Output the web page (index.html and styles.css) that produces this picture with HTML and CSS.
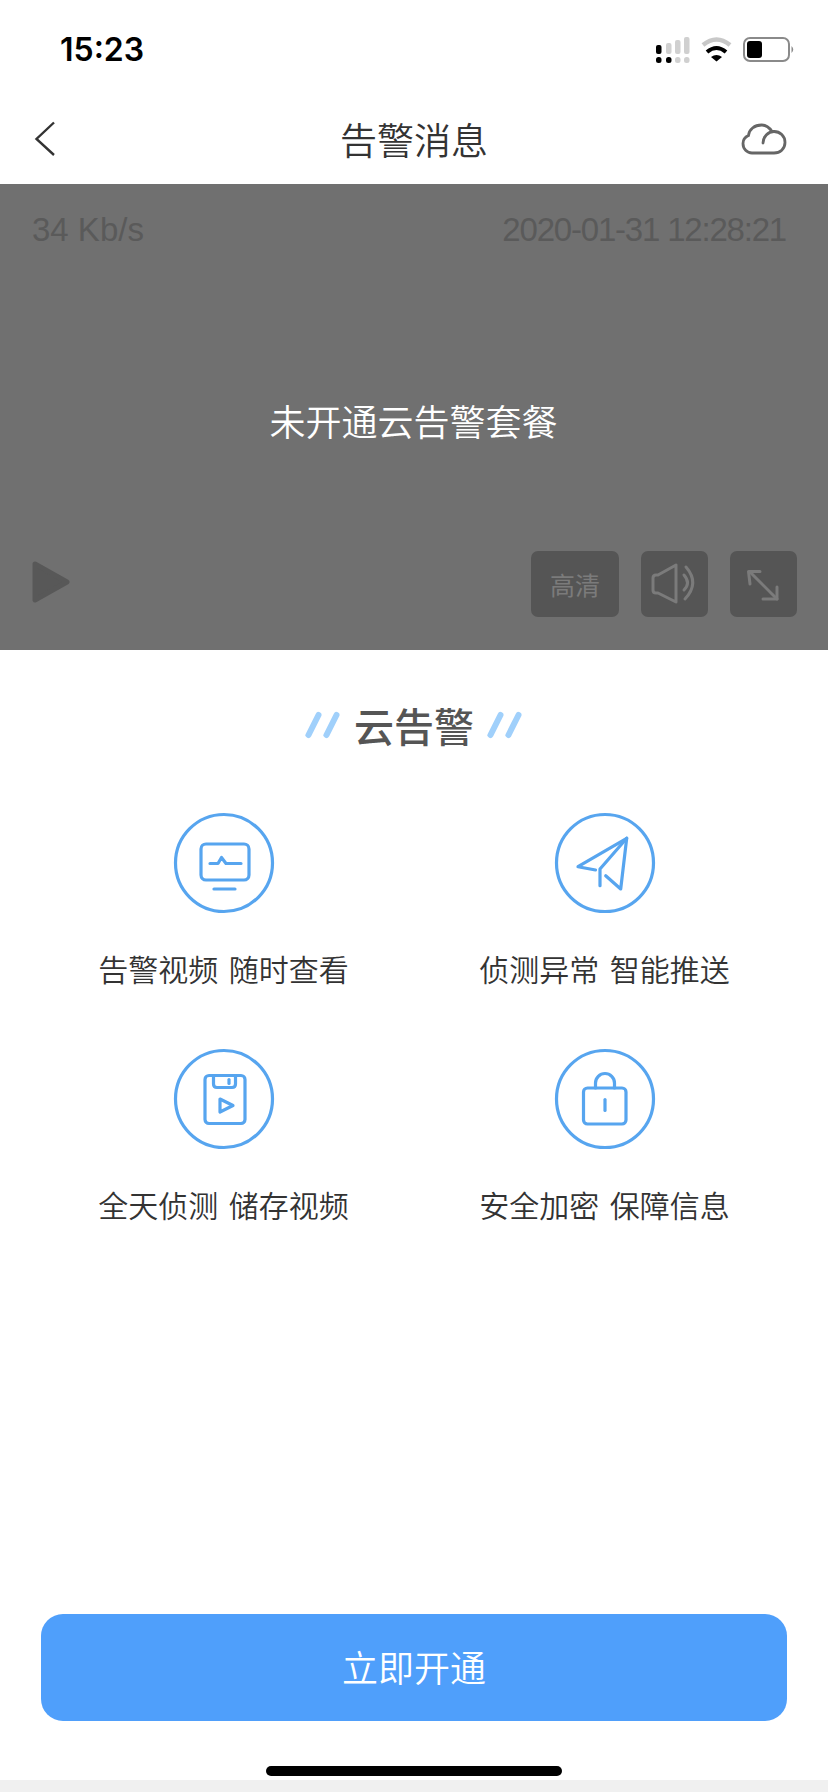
FILE: index.html
```html
<!DOCTYPE html>
<html lang="zh-CN">
<head>
<meta charset="utf-8">
<title>告警消息</title>
<link rel="stylesheet" href="styles.css">
</head>
<body>
<div class="page">
  <header class="status">
    <span class="time">15:23</span>
    <svg class="status-icons" width="140" height="28" viewBox="0 0 140 28" fill="none">
      <g fill="#d0d0d0">
        <rect x="10" y="6" width="5.500" height="11" rx="2"/>
        <rect x="19" y="3" width="5.500" height="14" rx="2"/>
        <rect x="28" y="0" width="5.500" height="17" rx="2"/>
        <rect x="19" y="20" width="5.500" height="6" rx="2.500"/>
        <rect x="28" y="20" width="5.500" height="6" rx="2.500"/>
      </g>
      <g fill="#000">
        <rect x="0" y="8" width="5.500" height="9" rx="2"/>
        <rect x="0" y="20" width="5.500" height="6" rx="2.500"/>
        <rect x="10" y="20" width="5.500" height="6" rx="2.500"/>
      </g>
      <path d="M47 8 Q60.500 -3 74 8" stroke="#c8c8c8" stroke-width="4.500"/>
      <path d="M51 15 Q60.500 7 70 15" stroke="#000" stroke-width="4"/>
      <path d="M55 20 L60.500 24.500 L66 20 Q60.500 16 55 20Z" fill="#000"/>
      <rect x="88" y="1" width="45" height="23" rx="6" stroke="#8a8a8a" stroke-width="2"/>
      <rect x="91" y="4" width="15" height="17" rx="3" fill="#000"/>
      <path d="M135.500 9 Q139 12.500 135.500 16Z" fill="#8a8a8a"/>
    </svg>
  </header>

  <nav class="nav">
    <svg class="nav-back" width="22" height="36" viewBox="0 0 22 36" fill="none">
      <path d="M20 1.500 L2.500 18 L20 34" stroke="#333" stroke-width="2.400"/>
    </svg>
    <h1 class="nav-title">告警消息</h1>
    <svg class="nav-cloud" width="46" height="32" viewBox="0 0 46 32" fill="none" stroke="#666" stroke-width="2.800" stroke-linecap="round">
      <path d="M11 30 H33 C39 30 44 26 44 19.500 C44 13 39 8.500 33 8.500 L31 8.500 C28 4 24.500 2 20.500 2 C13.500 2 8 6.500 7.500 12.500 C4 14 2 17 2 20.500 C2 26 6 30 11 30Z"/>
      <path d="M22 20 C22 14 27 8.500 33 8.500"/>
    </svg>
  </nav>

  <section class="video">
    <div class="video-top">
      <span>34 Kb/s</span>
      <span class="stamp">2020-01-31 12:28:21</span>
    </div>
    <p class="video-msg">未开通云告警套餐</p>
    <div class="video-bar">
      <svg class="play" width="38" height="42" viewBox="0 0 38 42">
        <path d="M3 3 L35 21 L3 39Z" fill="#585858" stroke="#585858" stroke-width="5" stroke-linejoin="round"/>
      </svg>
      <div class="controls">
        <span class="ctl ctl-text">高清</span>
        <span class="ctl">
          <svg width="67" height="66" viewBox="0 0 67 66" fill="none" stroke="#7b7b7b" stroke-width="3" stroke-linejoin="round" stroke-linecap="round">
            <path d="M17 24 L35 14 V51 L17 42 H15 Q12 42 12 39 V27 Q12 24 15 24Z"/>
            <path d="M43 24 Q50 32 43 39"/>
            <path d="M45 16 Q59 32 44 48"/>
          </svg>
        </span>
        <span class="ctl">
          <svg width="67" height="66" viewBox="0 0 67 66" fill="none" stroke="#7b7b7b" stroke-width="3" stroke-linecap="round" stroke-linejoin="round">
            <path d="M20 21 L47 48"/>
            <path d="M30 20.500 H18.500 L20 33"/>
            <path d="M33 48 H47 V36"/>
          </svg>
        </span>
      </div>
    </div>
  </section>

  <main class="content">
    <h2 class="promo-title">
      <svg width="36" height="28" viewBox="0 0 36 28" fill="none" stroke="#a0d0fb" stroke-width="6" stroke-linecap="round">
        <path d="M3.500 24 L13.500 4"/><path d="M21.500 24 L31.500 4"/>
      </svg>
      <span>云告警</span>
      <svg width="36" height="28" viewBox="0 0 36 28" fill="none" stroke="#a0d0fb" stroke-width="6" stroke-linecap="round">
        <path d="M3.500 24 L13.500 4"/><path d="M21.500 24 L31.500 4"/>
      </svg>
    </h2>

    <div class="features">
      <div class="feature">
        <svg class="f-icon" width="104" height="104" viewBox="0 0 104 104" fill="none">
          <circle cx="52" cy="52" r="48.500"/>
          <rect x="29" y="33" width="48" height="36" rx="5"/>
          <path d="M42 78 H63"/>
          <path d="M38 52.500 H46 L49.500 46.500 L54 52.500 H69"/>
        </svg>
        <p>告警视频 随时查看</p>
      </div>
      <div class="feature">
        <svg class="f-icon" width="104" height="104" viewBox="0 0 104 104" fill="none">
          <circle cx="52" cy="52" r="48.500"/>
          <path d="M42.500 59 L25 55.700 L73.700 27.300 L67.700 78 L52.700 64.700"/>
          <path d="M73.700 27.300 L47 58 V74.700"/>
        </svg>
        <p>侦测异常 智能推送</p>
      </div>
      <div class="feature">
        <svg class="f-icon" width="104" height="104" viewBox="0 0 104 104" fill="none">
          <circle cx="52" cy="52" r="48.500"/>
          <rect x="33" y="28.500" width="40" height="48" rx="4"/>
          <path d="M41.500 29 V37 Q41.500 40.500 45 40.500 H60 Q63.500 40.500 63.500 37 V29"/>
          <path d="M57 32.500 V36.500"/>
          <path d="M48 52 L61 58.500 L48 65Z"/>
        </svg>
        <p>全天侦测 储存视频</p>
      </div>
      <div class="feature">
        <svg class="f-icon" width="104" height="104" viewBox="0 0 104 104" fill="none">
          <circle cx="52" cy="52" r="48.500"/>
          <rect x="30.500" y="41" width="42.500" height="36" rx="4"/>
          <path d="M42.500 41 V36 A9.500 9.500 0 0 1 61.500 36 V41"/>
          <path d="M52 52.500 V63.500"/>
        </svg>
        <p>安全加密 保障信息</p>
      </div>
    </div>

    <button class="cta" type="button">立即开通</button>
  </main>

  <footer class="home">
    <span class="home-bar"></span>
  </footer>
  <div class="strip"></div>
</div>
</body>
</html>
```

FILE: styles.css
```css
* { box-sizing: border-box; }
html, body { margin: 0; padding: 0; background: #fff; }
body { font-family: "Noto Sans CJK SC", "Noto Sans", sans-serif; }
p, h1, h2 { margin: 0; font-weight: 400; }

.page {
  width: 828px;
  height: 1792px;
  display: flex;
  flex-direction: column;
  overflow: hidden;
}

.status {
  height: 90px;
  flex: none;
  display: flex;
  justify-content: space-between;
  align-items: flex-start;
  padding: 36px 32px 0 60px;
}
.time {
  font-family: Inter, Roboto, sans-serif;
  font-weight: 600;
  font-size: 32px;
  line-height: 28px;
  color: #000;
}
.status-icons { margin-top: 1px; }

.nav {
  height: 94px;
  flex: none;
  display: grid;
  grid-template-columns: 1fr auto 1fr;
  align-items: center;
  padding: 4px 41px 0;
}
.nav-back { margin-left: -7px; }
.nav-cloud { justify-self: end; }
.nav-title {
  font-size: 37px;
  line-height: 50px;
  color: #333;
  font-weight: 350;
}

.video {
  height: 466px;
  flex: none;
  background: #707070;
  display: flex;
  flex-direction: column;
  padding: 30px 33px 33px 32px;
}
.video-top {
  display: flex;
  justify-content: space-between;
  padding-right: 9px;
  font-family: "Liberation Sans", Arial, sans-serif;
  font-size: 33px;
  line-height: 32px;
  color: #5a5a5a;
}
.stamp { letter-spacing: -1.2px; }
.video-msg {
  flex: 1;
  display: flex;
  align-items: center;
  justify-content: center;
  padding-top: 42px;
  color: #fff;
  font-size: 36px;
  font-weight: 350;
}
.video-bar {
  display: flex;
  justify-content: space-between;
  align-items: center;
}
.play { margin-top: -4px; }
.controls { display: flex; gap: 22px; margin-right: -2px; }
.ctl {
  width: 67px;
  height: 66px;
  background: #555;
  border-radius: 7px;
  display: flex;
  align-items: center;
  justify-content: center;
}
.ctl-text {
  width: 88px;
  color: #7b7b7b;
  font-size: 25px;
}

.content {
  flex: 1;
  display: flex;
  flex-direction: column;
  min-height: 0;
}
.promo-title {
  margin-top: 51px;
  height: 48px;
  display: flex;
  align-items: center;
  justify-content: center;
  gap: 13px;
  color: #555;
  font-size: 40px;
  line-height: 48px;
  font-weight: 500;
}

.features {
  margin-top: 62px;
  padding: 0 33px;
  display: grid;
  grid-template-columns: 1fr 1fr;
  row-gap: 60px;
}
.feature {
  display: flex;
  flex-direction: column;
  align-items: center;
  gap: 34px;
}
.feature p {
  font-size: 30px;
  line-height: 38px;
  color: #333;
  font-weight: 350;
  word-spacing: 4px;
}
.f-icon {
  stroke: #57a5ef;
  stroke-width: 3.200;
  stroke-linecap: round;
  stroke-linejoin: round;
}

.cta {
  margin: auto 41px 0;
  height: 107px;
  flex: none;
  padding: 0 0 4px;
  border: 0;
  border-radius: 22px;
  background: #4f9ffb;
  color: #fff;
  font-family: inherit;
  font-size: 36px;
  font-weight: 350;
}

.home {
  height: 59px;
  flex: none;
  padding-top: 45px;
  display: flex;
  justify-content: center;
}
.home-bar {
  width: 296px;
  height: 10px;
  border-radius: 5px;
  background: #000;
}
.strip {
  height: 12px;
  flex: none;
  background: #f0f0f0;
}
```
